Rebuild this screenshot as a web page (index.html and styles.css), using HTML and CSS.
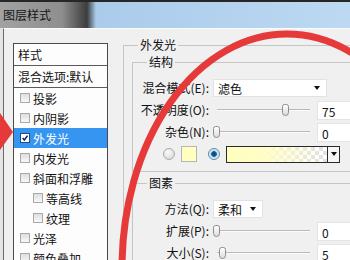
FILE: index.html
```html
<!DOCTYPE html>
<html lang="zh-CN">
<head>
    <meta charset="UTF-8">
    <title>图层样式</title>
    <link rel="stylesheet" href="styles.css">
</head>
<body>
    <div class="window">
        <div class="titlebar"><span class="title">图层样式</span></div>

        <div class="dialog">
            <div class="side">
                <div class="style-list">
                    <div class="list-head">样式</div>
                    <div class="list-blend">混合选项:默认</div>
                    <div class="item"><span class="cb"></span>投影</div>
                    <div class="item"><span class="cb"></span>内阴影</div>
                    <div class="item active"><span class="cb checked"><svg viewBox="0 0 10 10"><polyline points="2,5 4.2,7.5 8.2,2"/></svg></span>外发光</div>
                    <div class="item"><span class="cb"></span>内发光</div>
                    <div class="item"><span class="cb"></span>斜面和浮雕</div>
                    <div class="item sub"><span class="cb"></span>等高线</div>
                    <div class="item sub"><span class="cb"></span>纹理</div>
                    <div class="item"><span class="cb"></span>光泽</div>
                    <div class="item"><span class="cb"></span>颜色叠加</div>
                </div>
            </div>

            <div class="main">
                <fieldset class="group outer">
                    <legend>外发光</legend>

                    <fieldset class="group inner">
                        <legend>结构</legend>
                        <div class="row">
                            <label>混合模式(E):</label>
                            <div class="select wide"><span>滤色</span><i class="arrow"></i></div>
                        </div>
                        <div class="row">
                            <label>不透明度(O):</label>
                            <div class="slider-field">
                                <div class="slider"><span class="thumb" style="left:69px"></span></div>
                                <div class="num">75</div>
                            </div>
                        </div>
                        <div class="row">
                            <label>杂色(N):</label>
                            <div class="slider-field">
                                <div class="slider"><span class="thumb" style="left:0px"></span></div>
                                <div class="num">0</div>
                            </div>
                        </div>
                        <div class="color-row">
                            <span class="radio"></span>
                            <span class="swatch"></span>
                            <span class="radio on"></span>
                            <div class="gradient"><div class="grad-fill"></div><div class="grad-btn"><i class="arrow"></i></div></div>
                        </div>
                    </fieldset>

                    <fieldset class="group inner elements">
                        <legend>图素</legend>
                        <div class="row">
                            <label>方法(Q):</label>
                            <div class="select narrow"><span>柔和</span><i class="arrow"></i></div>
                        </div>
                        <div class="row">
                            <label>扩展(P):</label>
                            <div class="slider-field">
                                <div class="slider"><span class="thumb" style="left:0px"></span></div>
                                <div class="num">0</div>
                            </div>
                        </div>
                        <div class="row">
                            <label>大小(S):</label>
                            <div class="slider-field">
                                <div class="slider"><span class="thumb" style="left:6px"></span></div>
                                <div class="num">5</div>
                            </div>
                        </div>
                    </fieldset>
                </fieldset>
            </div>
        </div>

        <!-- annotation drawn over the screenshot -->
        <svg class="marks" width="350" height="260" viewBox="0 0 350 260">
            <polygon points="0,113 13,132 0,150" fill="#e5393a"/>
            <ellipse cx="287" cy="268" rx="165" ry="234" fill="none" stroke="#e5393a" stroke-width="7"/>
        </svg>
    </div>
</body>
</html>
```

FILE: styles.css
```css
html,body{margin:0;padding:0}
body{width:350px;height:260px;overflow:hidden;background:#e4e4e4;font-family:"Noto Sans CJK SC","Liberation Sans",sans-serif;font-size:12px;color:#111}

.window{position:relative;width:350px;height:260px;overflow:hidden}

.titlebar{
    height:26px;
    border-top:2px solid #262626;
    background:linear-gradient(to right,#a2a2a2 0,#8e8e8e 62px,#3c3c3c 87px,#aacbea 96px,#bdd9f2 100%);
    display:flex;
    align-items:center;
}
.title{padding-left:3px;font-size:12px;color:#141414;line-height:16px}

.dialog{
    display:flex;
    height:240px;
    margin-left:3px;
    border-left:1px solid #6a6a6a;
    border-top:1px solid #fdfdfd;
    background:#f0f0f0;
}

/* left list */
.side{margin:14px 0 0 9px;flex:none}
.style-list{width:93px;border:1px solid #4a4a4a;border-bottom:none;background:#fdfdfd;height:260px}
.list-head,.list-blend{height:21px;line-height:21px;padding-left:4px;border-bottom:1px solid #5a5a5a}
.item{height:20px;display:flex;align-items:center;padding-left:6px;gap:3px;white-space:nowrap}
.item.sub{padding-left:19px}
.item.active{background:#3795f2;color:#fff}

.cb{width:8px;height:8px;border:1px solid #a9a9a9;background:linear-gradient(#dedede,#f8f8f8);flex:none;display:flex}
.cb.checked{background:#fff;border-color:#204a82}
.cb svg{width:8px;height:8px}
.cb polyline{fill:none;stroke:#0e2c66;stroke-width:2}

/* right side */
.main{margin:8px 0 0 15px;width:290px;flex:none}

.group{margin:0;border:1px solid #c5c5c5;border-right:none;min-width:0}
.group legend{padding:0 2px;line-height:16px;font-size:12px}
.outer{padding:0 0 0 8px;border-bottom:none;height:260px}
.outer > legend{margin-left:6px}
.inner{margin-top:1px;padding:7px 0 6px 6px}
.inner > legend{margin-left:8px}
.elements{margin-top:3px;border-bottom:none}

.row{display:grid;grid-template-columns:70px auto;column-gap:4px;align-items:center;height:22px}
.row label{text-align:right;white-space:nowrap;line-height:16px}

.select{height:18px;background:#fff;border:1px solid #e2e2e2;display:flex;align-items:center;justify-content:space-between;padding:0 6px 0 4px;box-sizing:border-box}
.select.wide{width:114px}
.select.narrow{width:50px}
.arrow{display:block;width:0;height:0;border-left:3.5px solid transparent;border-right:3.5px solid transparent;border-top:4px solid #111}

.slider-field{display:flex;align-items:center;gap:7px}
.slider{position:relative;width:97px;height:14px}
.slider::before{content:"";position:absolute;left:4px;right:0;top:6px;height:1px;background:#b9b9b9;border-bottom:1px solid #fbfbfb}
.thumb{position:absolute;top:1px;width:5px;height:10px;border:1px solid #8d8d8d;border-radius:3px 3px 4px 4px;background:linear-gradient(#fff,#dcdcdc)}
.num{width:50px;height:19px;line-height:19px;background:#fff;border:1px solid #e4e4e4;padding-left:4px;box-sizing:border-box}

.color-row{display:flex;align-items:center;height:22px;padding-left:24px}
.radio{width:10px;height:10px;border:1px solid #ababab;border-radius:50%;background:radial-gradient(circle at 40% 35%,#fbfbfb,#cfcfcf);flex:none}
.radio.on{border-color:#5a8ab2;background:radial-gradient(circle,#0f3f66 0,#1f5f8f 2.5px,#bfe0f4 3.2px,#eef7fc 100%)}
.swatch{width:14px;height:14px;border:1px solid #b5b5b5;background:#ffffc0;margin:0 11px 0 6px;flex:none}
.gradient{margin-left:6px;width:114px;height:17px;border:1px solid #2a2a2a;box-sizing:border-box;display:flex;background-color:#fff;background-image:conic-gradient(#e2e2e2 25%,#fff 0 50%,#e2e2e2 0 75%,#fff 0);background-size:8px 8px}
.grad-fill{flex:1;background:linear-gradient(to right,#ffffbe 0,#fffdc6 35%,rgba(255,255,200,0) 95%)}
.grad-btn{width:11px;background:#f6f6f6;border-left:1px solid #2a2a2a;display:flex;align-items:center;justify-content:center}

.marks{position:absolute;left:0;top:0;pointer-events:none}
```
